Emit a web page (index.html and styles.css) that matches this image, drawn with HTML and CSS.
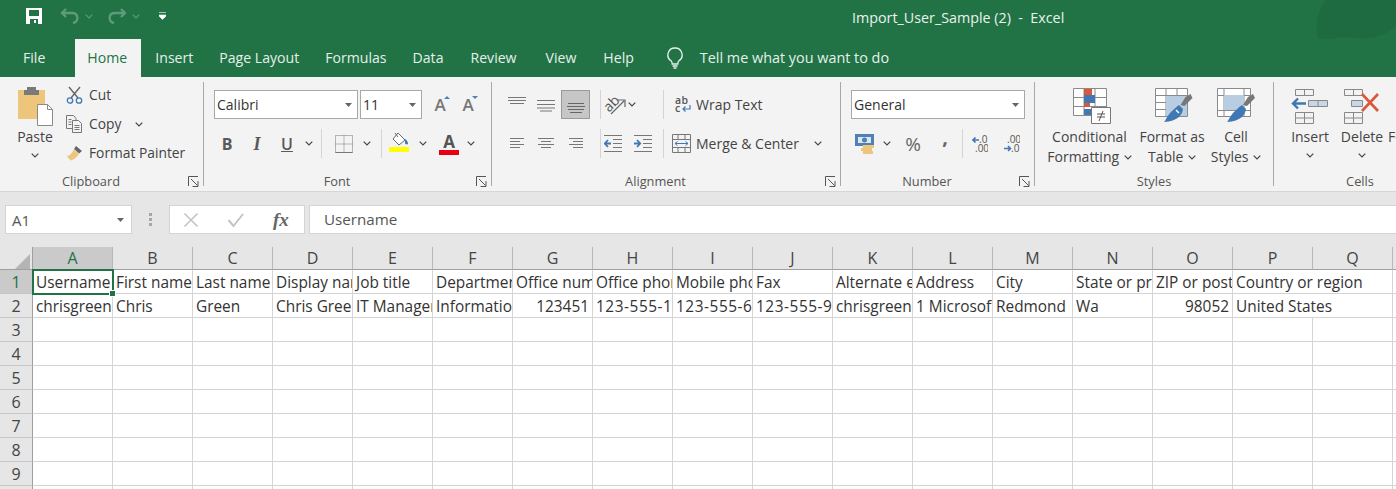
FILE: index.html
```html
<!DOCTYPE html>
<html lang="en">
<head>
<meta charset="utf-8">
<title>Import_User_Sample (2) - Excel</title>
<link rel="stylesheet" href="styles.css">
</head>
<body>

<svg class="sprite" width="0" height="0">
  <symbol id="chev" viewBox="0 0 8 5"><path d="M.7.7 4 4 7.3.7" fill="none" stroke="currentColor" stroke-width="1.2"/></symbol>
  <symbol id="launch" viewBox="0 0 11 11"><path d="M.5 10V.5H10M3 3l6.5 6.5M4.5 10.5h5.5V5" fill="none" stroke="#555"/></symbol>
  <symbol id="caret" viewBox="0 0 7 4"><path d="M0 0h7L3.5 4z" fill="#666"/></symbol>
</svg>

<div class="titlebar">
  <div class="qat">
    <svg class="qat_save" width="18" height="18" viewBox="0 0 18 18"><path d="M1 1h16v16H1z" fill="#fff"/><path d="M4 3h10v6H4z" fill="#217346"/><path d="M5 12h8v5H5z" fill="#217346"/><path d="M9 13h2v3H9z" fill="#fff"/></svg>
    <svg class="qat_arrow" width="20" height="16" viewBox="0 0 20 16"><path d="M6 1 2 5l4 4M2 5h10c7 0 7 9 1 10" fill="none" stroke="#5d9b79" stroke-width="2.4"/></svg>
    <svg class="qat_chev" width="8" height="5"><use href="#chev"/></svg>
    <svg class="qat_arrow redo" width="20" height="16" viewBox="0 0 20 16"><path d="m14 1 4 4-4 4M18 5H8c-7 0-7 9-1 10" fill="none" stroke="#5d9b79" stroke-width="2.4"/></svg>
    <svg class="qat_chev" width="8" height="5"><use href="#chev"/></svg>
    <svg class="qat_more" width="7" height="8" viewBox="0 0 7 8"><path d="M0 .5h7M0 3h7v1L3.5 7.5 0 4z" fill="#fff" stroke="#fff" stroke-width=".6"/></svg>
  </div>
  <div class="doc_title">Import_User_Sample (2)&nbsp; -&nbsp; Excel</div>
  <svg class="blob" width="80" height="48" viewBox="0 0 80 48"><path d="M10 0C0 12-2 30 3 44c10-6 22-8 36-6 16 2 30-2 41-12V0z" fill="#1f6b41"/></svg>
</div>

<div class="tabs">
  <div class="tab file">File</div>
  <div class="tab active">Home</div>
  <div class="tab">Insert</div>
  <div class="tab">Page Layout</div>
  <div class="tab">Formulas</div>
  <div class="tab">Data</div>
  <div class="tab review">Review</div>
  <div class="tab view">View</div>
  <div class="tab help">Help</div>
  <svg class="bulb" width="18" height="22" viewBox="0 0 18 22"><path d="M9 1a7 7 0 0 0-4 12.8c.9.8 1.2 1.7 1.2 3.2h5.6c0-1.5.3-2.4 1.2-3.2A7 7 0 0 0 9 1z" fill="none" stroke="#e8f1ec" stroke-width="1.3"/><path d="M6.5 19h5M7.5 21h3" stroke="#e8f1ec" stroke-width="1.3"/></svg>
  <div class="tell">Tell me what you want to do</div>
</div>

<div class="ribbon">

  <div class="group clipboard">
    <div class="group_body">
      <div class="big_btn paste">
        <svg width="40" height="40" viewBox="0 0 40 40"><path d="M3 4h27v29H3z" fill="#edc67c"/><path d="M9 4h3V1h9v3h3v5H9z" fill="#7a7a7a"/><path d="M22.5 18.5h10l5 5v16h-15z" fill="#fff" stroke="#8a8a8a"/><path d="M32.5 18.5v5h5" fill="none" stroke="#8a8a8a"/></svg>
        <div class="big_label">Paste</div>
        <svg class="chev_under" width="8" height="5"><use href="#chev"/></svg>
      </div>
      <div class="small_list">
        <div class="small_btn">
          <svg width="17" height="18" viewBox="0 0 17 18"><path d="M3 1l9 11M14 1 5 12" stroke="#666" stroke-width="1.4"/><circle cx="4" cy="14.5" r="2.7" fill="none" stroke="#3f78b3" stroke-width="1.3"/><circle cx="13" cy="14.5" r="2.7" fill="none" stroke="#3f78b3" stroke-width="1.3"/></svg>
          <span>Cut</span>
        </div>
        <div class="small_btn">
          <svg width="17" height="18" viewBox="0 0 17 18"><path d="M.5.5h7l2.5 3v10H.5z" fill="#f3f3f3" stroke="#777"/><path d="M6.5 5.5h6l3 3v9h-9z" fill="#f3f3f3" stroke="#777"/><path d="M8.5 10.5h5M8.5 12.5h5M8.5 14.5h5M2.5 4.5h3M2.5 7h3M2.5 9.5h3" stroke="#777"/></svg>
          <span>Copy</span>
          <svg class="chev_copy" width="8" height="5"><use href="#chev"/></svg>
        </div>
        <div class="small_btn">
          <svg width="17" height="16" viewBox="0 0 17 16"><path d="M10 1l6 5-3 2.5L8 4z" fill="#666"/><path d="M8 4.5l5 4.5c-2 3-5 5.5-8 6.5-1-.5-3-2.5-4-4.5 3 0 5-3 7-6.5z" fill="#edc67c"/></svg>
          <span>Format Painter</span>
        </div>
      </div>
    </div>
    <div class="group_foot">
      <span class="group_label">Clipboard</span>
      <svg class="launcher" width="11" height="11"><use href="#launch"/></svg>
    </div>
  </div>

  <div class="group font">
    <div class="group_body rows">
      <div class="row">
        <div class="combo font_name"><span>Calibri</span><svg width="7" height="4"><use href="#caret"/></svg></div>
        <div class="combo font_size"><span>11</span><svg width="7" height="4"><use href="#caret"/></svg></div>
        <div class="grow_a first">A<svg class="grow_mark" width="6" height="3" viewBox="0 0 6 3"><path d="M0 3l3-3 3 3z" fill="#4f81b5"/></svg></div>
        <div class="grow_a">A<svg class="grow_mark" width="6" height="3" viewBox="0 0 6 3"><path d="M0 0h6L3 3z" fill="#4f81b5"/></svg></div>
      </div>
      <div class="row font_tools">
        <div class="tool bold">B</div>
        <div class="tool italic">I</div>
        <div class="tool under">U</div>
        <svg class="chev" width="8" height="5"><use href="#chev"/></svg>
        <div class="sep m_font1"></div>
        <svg class="m_border" width="18" height="18" viewBox="0 0 18 18"><path d="M.5.5h17v17H.5zM9 .5v17M.5 9h17" fill="none" stroke="#777" stroke-dasharray="1 1"/><path d="M.5 17.5h17" stroke="#777"/></svg>
        <svg class="chev m_chev" width="8" height="5"><use href="#chev"/></svg>
        <div class="sep m_font2"></div>
        <svg class="m_fill" width="20" height="21" viewBox="0 0 20 21"><path d="M9 1l7 7-6 5-6-6z" fill="#fff" stroke="#666"/><path d="M6 1l3 4" stroke="#666"/><path d="M16 7c2 1 3 3 3 5-1 1-3 0-3-1z" fill="#3f78b3"/><path d="M0 15h20v5H0z" fill="#ffff00"/></svg>
        <svg class="chev m_chev2" width="8" height="5"><use href="#chev"/></svg>
        <div class="font_color"><span>A</span><i></i></div>
        <svg class="chev m_chev3" width="8" height="5"><use href="#chev"/></svg>
      </div>
    </div>
    <div class="group_foot">
      <span class="group_label">Font</span>
      <svg class="launcher" width="11" height="11"><use href="#launch"/></svg>
    </div>
  </div>

  <div class="group alignment">
    <div class="group_body rows">
      <div class="row">
        <div class="tool"><svg width="18" height="19" viewBox="0 0 18 19"><path d="M0 2.5h18M0 5.5h18M2 8.5h14" stroke="#777"/></svg></div>
        <div class="tool"><svg width="18" height="19" viewBox="0 0 18 19"><path d="M0 5.5h18M0 9.5h18M0 13h18M3 16h12" stroke="#777"/></svg></div>
        <div class="tool pressed"><svg width="18" height="19" viewBox="0 0 18 19"><path d="M1 8.5h16M0 11.5h18M1 14.5h16M3 17.5h12" stroke="#666"/></svg></div>
        <div class="sep m_al1"></div>
        <svg class="m_orient" width="26" height="20" viewBox="0 0 26 20"><text x="1" y="14" class="orient_txt" transform="rotate(-45 8 10)">ab</text><path d="M8 19 21 6M15 5h7v7" fill="none" stroke="#666" stroke-width="1.2"/></svg>
        <svg class="chev m_al_chev" width="8" height="5"><use href="#chev"/></svg>
        <div class="sep m_al2"></div>
        <svg class="m_wrap" width="16" height="17" viewBox="0 0 16 17"><text x="0" y="8" class="wrap_txt">ab</text><text x="0" y="16" class="wrap_txt">c</text><path d="M15 9v4H8M10.5 10.5 8 13l2.5 2.5" fill="none" stroke="#3f78b3" stroke-width="1.2"/></svg>
        <span class="label m_text">Wrap Text</span>
      </div>
      <div class="row">
        <div class="tool"><svg width="18" height="14" viewBox="0 0 18 14"><path d="M2 1.5h14M2 4.5h10M2 7.5h14M2 10.5h10" stroke="#777"/></svg></div>
        <div class="tool"><svg width="18" height="14" viewBox="0 0 18 14"><path d="M1 1.5h16M4 4.5h10M1 7.5h16M4 10.5h10" stroke="#777"/></svg></div>
        <div class="tool m_right"><svg width="18" height="14" viewBox="0 0 18 14"><path d="M2 1.5h14M6 4.5h10M2 7.5h14M6 10.5h10" stroke="#777"/></svg></div>
        <div class="sep m_al1b"></div>
        <svg class="m_out" width="18" height="17" viewBox="0 0 18 17"><path d="M0 .5h18M9 4.5h9M9 8.5h9M9 12.5h9M0 16.5h18" stroke="#777"/><path d="M7 8.5H1M4 5 .8 8.5 4 12" fill="none" stroke="#3f78b3" stroke-width="1.8"/></svg>
        <svg class="m_ind" width="18" height="17" viewBox="0 0 18 17"><path d="M0 .5h18M9 4.5h9M9 8.5h9M9 12.5h9M0 16.5h18" stroke="#777"/><path d="M0 8.5h6M3 5l3.2 3.5L3 12" fill="none" stroke="#3f78b3" stroke-width="1.8"/></svg>
        <div class="sep m_al2b"></div>
        <svg class="m_merge" width="19" height="19" viewBox="0 0 19 19"><path d="M.5.5h18v18H.5zM.5 5.5h18M.5 13.5h18M6 .5v5M13 .5v5M6 13.5v5M13 13.5v5" fill="none" stroke="#777"/><path d="M3 9.5h13M5.5 7.5l-2.5 2 2.5 2M13.5 7.5l2.5 2-2.5 2" fill="none" stroke="#3f78b3"/></svg>
        <span class="label m_text">Merge &amp; Center</span>
        <svg class="chev m_mchev" width="8" height="5"><use href="#chev"/></svg>
      </div>
    </div>
    <div class="group_foot">
      <span class="group_label">Alignment</span>
      <svg class="launcher" width="11" height="11"><use href="#launch"/></svg>
    </div>
  </div>

  <div class="group number">
    <div class="group_body rows">
      <div class="row">
        <div class="combo num_fmt"><span>General</span><svg width="7" height="4"><use href="#caret"/></svg></div>
      </div>
      <div class="row">
        <svg class="m_acct" width="20" height="20" viewBox="0 0 20 20"><path d="M0 0h19v12H0z" fill="#4f81b5"/><path d="M3 3h13v6H3z" fill="#dbe6f1"/><circle cx="9.5" cy="6" r="2.5" fill="#4f81b5"/><path d="M8 11h11v3H8zM6 14h11v3H6zM8 17h10v3H8z" fill="#edc67c"/></svg>
        <svg class="chev m_n1" width="8" height="5"><use href="#chev"/></svg>
        <div class="pct">%</div>
        <div class="comma">,</div>
        <div class="sep m_n2"></div>
        <svg class="m_dec1" width="16" height="18" viewBox="0 0 16 18"><path d="M7 5H1M3.5 2.5 1 5l2.5 2.5" fill="none" stroke="#3f78b3" stroke-width="1.6"/><text x="7" y="8" class="dec_txt">.0</text><text x="3" y="17" class="dec_txt">.00</text></svg>
        <svg class="m_dec2" width="16" height="18" viewBox="0 0 16 18"><text x="3" y="8" class="dec_txt">.00</text><path d="M0 13.5h6M4 11l2.5 2.5L4 16" fill="none" stroke="#3f78b3" stroke-width="1.6"/><text x="7" y="17" class="dec_txt">.0</text></svg>
      </div>
    </div>
    <div class="group_foot">
      <span class="group_label">Number</span>
      <svg class="launcher" width="11" height="11"><use href="#launch"/></svg>
    </div>
  </div>

  <div class="group styles">
    <div class="group_body cols">
      <div class="col w_cond">
        <svg class="shift_cond" width="38" height="36" viewBox="0 0 38 36"><path d="M.5.5h33v27H.5zM11 .5v27M22 .5v27M.5 9.5h33M.5 18.5h33" fill="#fff" stroke="#8a8a8a"/><path d="M11 1h8v6h-8zM11 14h6v5h-6z" fill="#d9583b"/><path d="M11 7h11v8H11zM11 21h7v6h-7z" fill="#3f78b3"/><path d="M18.5 19.5h19v16h-19z" fill="#fff" stroke="#777"/><path d="M24 26h8M24 29h8M30 23l-4 10" stroke="#555"/></svg>
        <div class="big_label">Conditional</div>
        <div class="big_label line2">Formatting <svg width="8" height="5"><use href="#chev"/></svg></div>
      </div>
      <div class="col w_table">
        <svg class="shift_table" width="38" height="36" viewBox="0 0 38 36"><path d="M.5.5h32v28H.5zM11 .5v28M22 .5v28M.5 7.5h32M.5 14.5h32M.5 21.5h32" fill="#fff" stroke="#8a8a8a"/><path d="M11 8h21v20H11z" fill="#b9cde2"/><path d="M37.5 10l-8 8-4-1 5-8 5-3z" fill="#777"/><path d="M24 17l4 4c-1 6-5 12-19 13 2-2 3-6 7-10 3-3 5-5 8-7z" fill="#3f78b3"/><path d="M21 22l3 3" stroke="#fff" stroke-width="1.5"/></svg>
        <div class="big_label">Format as</div>
        <div class="big_label line2">Table <svg width="8" height="5"><use href="#chev"/></svg></div>
      </div>
      <div class="col w_cell">
        <svg width="38" height="36" viewBox="0 0 38 36"><path d="M.5.5h33v28H.5zM7 .5v28M27 .5v28M.5 7.5h33M.5 22.5h33" fill="#fff" stroke="#8a8a8a"/><path d="M7 7h20v15H7z" fill="#b9cde2"/><path d="M38 10l-8 8-4-1 5-8 5-3z" fill="#777"/><path d="M25 17l4 4c-1 6-5 12-19 13 2-2 3-6 7-10 3-3 5-5 8-7z" fill="#3f78b3"/></svg>
        <div class="big_label">Cell</div>
        <div class="big_label line2">Styles <svg width="8" height="5"><use href="#chev"/></svg></div>
      </div>
    </div>
    <div class="group_foot centered"><span class="group_label">Styles</span></div>
  </div>

  <div class="group cells">
    <div class="group_body cols">
      <div class="col w_ins">
        <svg width="38" height="36" viewBox="0 0 38 36"><path d="M4.5 1.5h18v6h-18zM13.5 1.5v6M4.5 24.5h18v11h-18zM4.5 30h18M13.5 24.5v11" fill="none" stroke="#888"/><path d="M17.5 12.5h19v6h-19zM27 12.5v6" fill="#c7d7e8" stroke="#888"/><path d="M15 15.5H2M7 10.5l-5 5 5 5" fill="none" stroke="#3f78b3" stroke-width="2.4"/></svg>
        <div class="big_label">Insert</div>
        <svg class="chev_under" width="8" height="5"><use href="#chev"/></svg>
      </div>
      <div class="col w_ins">
        <svg width="38" height="36" viewBox="0 0 38 36"><path d="M1.5 1.5h18v6h-18zM10.5 1.5v6M1.5 24.5h18v11h-18zM1.5 30h18M10.5 24.5v11" fill="none" stroke="#888"/><path d="M8.5 12.5h11v6h-11z" fill="#c7d7e8" stroke="#888"/><path d="M19 6l16 17M35 6 19 23" stroke="#d9583b" stroke-width="2.6"/></svg>
        <div class="big_label">Delete</div>
        <svg class="chev_under" width="8" height="5"><use href="#chev"/></svg>
      </div>
      <div class="col format_col">
        <div class="big_label">Format</div>
      </div>
    </div>
    <div class="group_foot cells_foot"><span class="group_label">Cells</span></div>
  </div>

</div>

<div class="formula_bar">
  <div class="name_box"><span>A1</span><svg width="7" height="4"><use href="#caret"/></svg></div>
  <div class="grip"><i></i><i></i><i></i></div>
  <div class="fx_box">
    <svg width="16" height="16" viewBox="0 0 16 16"><path d="M1.5 1.5l13 13M14.5 1.5l-13 13" stroke="#c4c4c4" stroke-width="1.6"/></svg>
    <svg width="18" height="16" viewBox="0 0 18 16"><path d="M1.5 8l5 6L16 2" fill="none" stroke="#c4c4c4" stroke-width="2"/></svg>
    <span class="fx">fx</span>
  </div>
  <div class="formula_input">Username</div>
</div>

<table class="sheet">
  <thead>
    <tr>
      <th class="corner"><svg width="15" height="15" viewBox="0 0 15 15"><path d="M15 0v15H0z" fill="#b4b4b4"/></svg></th>
      <th class="sel">A</th><th>B</th><th>C</th><th>D</th><th>E</th><th>F</th><th>G</th><th>H</th><th>I</th><th>J</th><th>K</th><th>L</th><th>M</th><th>N</th><th>O</th><th>P</th><th>Q</th><th></th>
    </tr>
  </thead>
  <tbody>
    <tr>
      <th class="sel">1</th>
      <td class="cur"><div>Username</div><i class="handle"></i></td><td><div>First name</div></td><td><div>Last name</div></td><td><div>Display name</div></td><td><div>Job title</div></td><td><div>Department</div></td><td><div>Office number</div></td><td><div>Office phone</div></td><td><div>Mobile phone</div></td><td><div>Fax</div></td><td><div>Alternate email</div></td><td><div>Address</div></td><td><div>City</div></td><td><div>State or province</div></td><td><div>ZIP or postal code</div></td><td class="spill"><div>Country or region</div></td><td></td><td></td>
    </tr>
    <tr>
      <th>2</th>
      <td><div>chrisgreen@contoso.com</div></td><td><div>Chris</div></td><td><div>Green</div></td><td><div>Chris Green</div></td><td><div>IT Manager</div></td><td><div>Information Technology</div></td><td class="num"><div>123451</div></td><td class="phone"><div>123-555-1211</div></td><td class="phone"><div>123-555-6641</div></td><td class="phone"><div>123-555-9821</div></td><td><div>chrisgreen@contoso.com</div></td><td><div>1 Microsoft Way</div></td><td><div>Redmond</div></td><td><div>Wa</div></td><td class="num"><div>98052</div></td><td class="spill"><div>United States</div></td><td></td><td></td>
    </tr>
    <tr><th>3</th><td></td><td></td><td></td><td></td><td></td><td></td><td></td><td></td><td></td><td></td><td></td><td></td><td></td><td></td><td></td><td></td><td></td><td></td></tr>
    <tr><th>4</th><td></td><td></td><td></td><td></td><td></td><td></td><td></td><td></td><td></td><td></td><td></td><td></td><td></td><td></td><td></td><td></td><td></td><td></td></tr>
    <tr><th>5</th><td></td><td></td><td></td><td></td><td></td><td></td><td></td><td></td><td></td><td></td><td></td><td></td><td></td><td></td><td></td><td></td><td></td><td></td></tr>
    <tr><th>6</th><td></td><td></td><td></td><td></td><td></td><td></td><td></td><td></td><td></td><td></td><td></td><td></td><td></td><td></td><td></td><td></td><td></td><td></td></tr>
    <tr><th>7</th><td></td><td></td><td></td><td></td><td></td><td></td><td></td><td></td><td></td><td></td><td></td><td></td><td></td><td></td><td></td><td></td><td></td><td></td></tr>
    <tr><th>8</th><td></td><td></td><td></td><td></td><td></td><td></td><td></td><td></td><td></td><td></td><td></td><td></td><td></td><td></td><td></td><td></td><td></td><td></td></tr>
    <tr><th>9</th><td></td><td></td><td></td><td></td><td></td><td></td><td></td><td></td><td></td><td></td><td></td><td></td><td></td><td></td><td></td><td></td><td></td><td></td></tr>
    <tr><th>10</th><td></td><td></td><td></td><td></td><td></td><td></td><td></td><td></td><td></td><td></td><td></td><td></td><td></td><td></td><td></td><td></td><td></td><td></td></tr>
  </tbody>
</table>

</body>
</html>
```

FILE: styles.css
```css
*,*:after,*:before{
  box-sizing: border-box;
}
html, body{
  height: 489px;
  overflow: hidden;
}
body{
  margin: 0;
  width: 1396px;
  font-family: "Open Sans", sans-serif;
  font-size: 14px;
  color: #444;
  background: #fff;
}
svg{
  display: block;
  flex: none;
}
.sprite{
  position: absolute;
}

/* title bar */
.titlebar{
  position: relative;
  height: 39px;
  background: #217346;
  color: #eaf2ed;
  overflow: hidden;
}
.qat{
  display: flex;
  align-items: center;
  height: 32px;
  padding-left: 25px;
}
.qat_arrow{
  margin-left: 17px;
}
.qat_arrow.redo{
  margin-left: 14px;
}
.qat_chev{
  margin-left: 5px;
  color: #5d9b79;
}
.qat_more{
  margin-left: 19px;
}
.doc_title{
  position: absolute;
  left: 852px;
  top: 8px;
  font-size: 14.3px;
  line-height: 19px;
  white-space: nowrap;
}
.blob{
  position: absolute;
  right: 0;
  top: 0;
}

/* tabs */
.tabs{
  display: flex;
  align-items: stretch;
  height: 38px;
  background: #217346;
  color: #e6f0ea;
  font-size: 14.1px;
  line-height: 38px;
}
.tab{
  padding: 0 13px;
  white-space: nowrap;
}
.tab.file{
  margin-left: 10px;
  margin-right: 17px;
}
.tab.active{
  background: #f3f3f3;
  color: #217346;
  padding: 0 12px;
  width: 66px;
  margin-right: 1px;
}
.tab.review{
  margin-left: 1px;
}
.tab.view{
  margin-left: 3px;
}
.tab.help{
  margin-left: 1px;
}
.bulb{
  align-self: center;
  margin-left: 19px;
}
.tell{
  margin-left: 16px;
  font-size: 14.4px;
}

/* ribbon */
.ribbon{
  display: flex;
  height: 115px;
  padding: 5px 0;
  background: #f3f3f3;
  border-bottom: 1px solid #d6d6d6;
  line-height: 18px;
}
.group{
  display: flex;
  flex-direction: column;
  flex: none;
  border-right: 1px solid #a8a8a8;
}
.clipboard{ width: 204px; }
.font{ width: 288px; }
.alignment{ width: 349px; }
.number{ width: 194px; }
.styles{ width: 239px; }
.cells{ width: 172px; border-right: 0; }
.group_body{
  display: flex;
  height: 90px;
}
.group_foot{
  display: flex;
  align-items: flex-start;
  height: 14px;
  font-size: 12.8px;
  color: #555;
}
.group_label{
  flex: 1;
  text-align: center;
  padding-right: 6px;
}
.centered .group_label{
  padding-right: 0;
}
.cells_foot .group_label{
  padding-right: 0;
}
.launcher{
  margin-right: 4px;
  margin-top: 4px;
}

/* clipboard */
.big_btn{
  display: flex;
  flex-direction: column;
  align-items: center;
  width: 60px;
  margin-left: 5px;
  padding-top: 4px;
}
.big_label{
  line-height: 20px;
  white-space: nowrap;
  text-align: center;
}
.paste .big_label{
  margin-top: 1px;
}
.chev_under{
  margin-top: 6px;
}
.small_list{
  display: flex;
  flex-direction: column;
  gap: 5px;
  margin-left: 1px;
  padding-top: 1px;
  font-size: 13.8px;
}
.small_btn{
  display: flex;
  align-items: center;
  gap: 6px;
  height: 24px;
  white-space: nowrap;
}
.chev_copy{
  margin-left: 8px;
}

/* rows of small tools */
.rows{
  flex-direction: column;
  gap: 10px;
  padding-top: 8px;
}
.row{
  display: flex;
  align-items: center;
  height: 29px;
}
.combo{
  display: flex;
  align-items: center;
  justify-content: space-between;
  height: 29px;
  padding: 0 5px 0 2px;
  background: #fff;
  border: 1px solid #a8a8a8;
  color: #333;
  font-size: 14px;
}
.font_name{ width: 144px; margin-left: 10px; }
.font_size{ width: 62px; margin-left: 2px; }
.num_fmt{ width: 174px; margin-left: 10px; }
.grow_a{
  position: relative;
  width: 18px;
  margin-left: 10px;
  font-size: 17px;
  color: #777;
  font-weight: 600;
  text-align: center;
}
.grow_a.first{
  margin-left: 9px;
}
.grow_mark{
  position: absolute;
  right: -1px;
  top: 0;
}
.tool{
  display: flex;
  align-items: center;
  justify-content: center;
  width: 29px;
  height: 29px;
}
.pressed{
  margin-left: 1px;
  background: #c6c6c6;
  border: 1px solid #9a9a9a;
}
.sep{
  align-self: stretch;
  width: 1px;
  background: #d4d4d4;
}
.label{
  white-space: nowrap;
}

/* font group */
.font_tools{
  padding-left: 8px;
}
.font_tools .tool{
  width: 30px;
  font-size: 16px;
  color: #5a5a5a;
}
.bold{ font-weight: 700; }
.italic{ font-family: "Liberation Serif", serif; font-style: italic; font-weight: 700; font-size: 18px !important; }
.under{ text-decoration: underline; font-weight: 600; }
.chev{ margin-left: 3px; }
.m_font1{ margin-left: 8px; }
.m_border{ margin-left: 13px; }
.m_chev{ margin-left: 10px; }
.m_font2{ margin-left: 10px; }
.m_fill{ margin-left: 7px; margin-top: -2px; }
.m_chev2{ margin-left: 10px; }
.font_color{
  width: 24px;
  margin-left: 10px;
  text-align: center;
  color: #555;
  font-size: 17px;
  font-weight: 700;
  line-height: 17px;
}
.font_color span{
  display: block;
}
.font_color i{
  display: block;
  height: 5px;
  margin: 0 2px;
  background: #e60012;
}
.m_chev3{ margin-left: 6px; }

/* alignment group */
.alignment .row{
  padding-left: 10px;
}
.m_al1{ margin-left: 10px; }
.m_orient{ margin-left: 2px; }
.m_al_chev{ margin-left: -1px; }
.m_al2{ margin-left: 27px; }
.m_wrap{ margin-left: 11px; }
.m_text{ margin-left: 5px; }
.m_right{ margin-left: 1px; }
.m_al1b{ margin-left: 10px; }
.m_out{ margin-left: 3px; }
.m_ind{ margin-left: 12px; }
.m_al2b{ margin-left: 11px; }
.m_merge{ margin-left: 8px; }
.m_mchev{ margin-left: 15px; }
.orient_txt{ font-size: 14px; fill: #555; }
.wrap_txt{ font-size: 10.5px; font-weight: 600; fill: #555; letter-spacing: .3px; }

/* number group */
.m_acct{ margin-left: 14px; }
.m_n1{ margin-left: 8px; }
.pct{
  width: 24px;
  margin-left: 10px;
  text-align: center;
  font-size: 19px;
  color: #666;
}
.comma{
  width: 20px;
  margin-left: 10px;
  margin-top: -14px;
  text-align: center;
  font-size: 20px;
  font-weight: 700;
  color: #666;
}
.m_n2{ margin-left: 7px; }
.m_dec1{ margin-left: 9px; }
.m_dec2{ margin-left: 16px; }
.dec_txt{ font-size: 10px; fill: #555; }

/* styles and cells groups */
.cols{
  padding-left: 10px;
}
.col{
  display: flex;
  flex-direction: column;
  align-items: center;
  padding-top: 6px;
}
.col > svg:first-child{
  margin-bottom: 3px;
}
.col .big_label svg{
  display: inline-block;
  vertical-align: 2px;
  margin-left: 1px;
}
.shift_cond{ margin-left: 5px; }
.shift_table{ margin-left: 4px; }
.w_cond{ width: 89px; }
.w_table{ width: 76px; }
.w_cell{ width: 52px; }
.w_ins{ width: 52px; }
.format_col{
  padding-top: 45px;
  align-items: flex-start;
}

/* formula bar */
.formula_bar{
  display: flex;
  align-items: flex-start;
  height: 55px;
  padding: 13px 0 0 5px;
  background: #e6e6e6;
}
.name_box{
  display: flex;
  align-items: center;
  justify-content: space-between;
  width: 127px;
  height: 29px;
  padding: 0 7px 0 6px;
  background: #fff;
  border: 1px solid #d4d4d4;
  font-size: 15px;
  color: #555;
}
.grip{
  display: flex;
  flex-direction: column;
  gap: 2px;
  width: 37px;
  height: 29px;
  justify-content: center;
  align-items: center;
}
.grip i{
  width: 3px;
  height: 3px;
  background: #a6a6a6;
}
.fx_box{
  display: flex;
  align-items: center;
  width: 136px;
  height: 29px;
  padding-left: 13px;
  gap: 28px;
  background: #fff;
  border: 1px solid #d4d4d4;
}
.fx{
  font-family: "Liberation Serif", serif;
  font-style: italic;
  font-weight: 700;
  font-size: 19px;
  color: #666;
}
.formula_input{
  flex: 1;
  height: 29px;
  margin-left: 4px;
  padding-left: 14px;
  background: #fff;
  border: 1px solid #d4d4d4;
  border-right: 0;
  font-size: 15.2px;
  line-height: 27px;
  color: #555;
}

/* sheet */
.sheet{
  border-collapse: separate;
  border-spacing: 0;
  table-layout: fixed;
  width: 1473px;
  font-size: 15.4px;
  color: #333;
}
.sheet th{
  width: 80px;
  background: #e6e6e6;
  color: #444;
  font-weight: 400;
  font-size: 16px;
  border-right: 1px solid #b8b8b8;
  padding: 0;
  text-align: center;
}
.sheet thead th{
  height: 23px;
  border-bottom: 1px solid #9f9f9f;
  line-height: 22px;
}
.sheet thead .corner{
  width: 33px;
  padding-right: 2px;
  border-right: 1px solid #9f9f9f;
}
.corner svg{
  margin-left: auto;
  margin-top: 6px;
}
.sheet tbody th{
  height: 24px;
  width: 33px;
  border-bottom: 1px solid #c6c6c6;
  border-right: 1px solid #9f9f9f;
  line-height: 22px;
}
.sheet th.sel{
  background: #cacaca;
  color: #217346;
}
.sheet td{
  position: relative;
  height: 24px;
  padding: 0;
  border-right: 1px solid #d4d4d4;
  border-bottom: 1px solid #d4d4d4;
}
.sheet td div{
  width: 79px;
  height: 23px;
  padding: 1px 0 0 3px;
  line-height: 23px;
  white-space: nowrap;
  overflow: hidden;
}
.sheet td.num div{
  text-align: right;
  padding: 1px 3px 0 0;
}
.sheet td.phone div{
  letter-spacing: .55px;
}
.sheet td.spill{
  border-right: 0;
}
.sheet td.spill div{
  width: auto;
  overflow: visible;
}
.sheet td.cur{
  outline: 2px solid #217346;
  outline-offset: -1px;
  z-index: 1;
}
.handle{
  position: absolute;
  right: -4px;
  bottom: -4px;
  width: 7px;
  height: 7px;
  background: #217346;
  border: 1px solid #fff;
}
```
